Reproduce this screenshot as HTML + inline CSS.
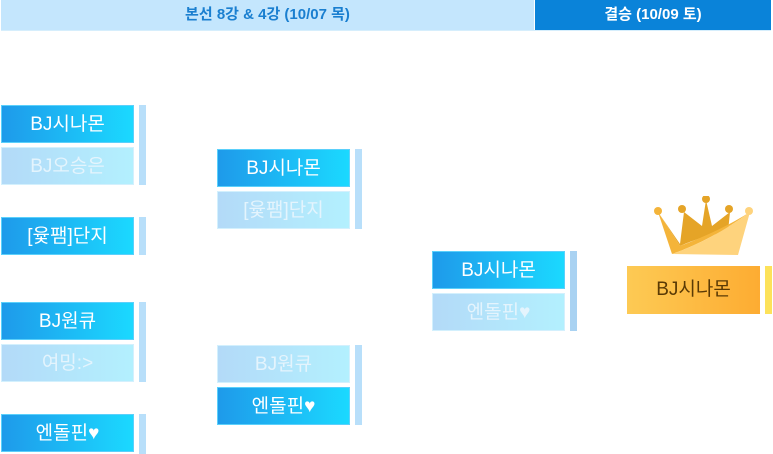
<!DOCTYPE html>
<html><head><meta charset="utf-8"><style>
body{margin:0;width:773px;height:454px;background:#fff;position:relative;overflow:hidden;font-family:"Liberation Sans","Noto Sans CJK KR",sans-serif}
.h{position:absolute;top:0;height:30px;line-height:30px;text-align:center;font-weight:bold;font-size:15px}
.b{position:absolute;width:133px;height:38px;line-height:38px;text-align:center;font-size:19px;color:#fff;box-sizing:border-box}
.a{background:linear-gradient(90deg,#1e9aea,#1bd9ff);border:1px solid #5bd0fb}
.i{background:linear-gradient(90deg,#b3daf8,#b3f0fe);color:#e4f4fd;border:1px solid #d3f0fd}
.r{position:absolute;width:7px;background:#b8dffa}
</style></head><body>
<div class="h" style="left:1px;width:533px;background:#c4e6fd;color:#1a7fd0">본선 8강 &amp; 4강 (10/07 목)</div>
<div class="h" style="left:535px;width:236px;background:#0a83d9;color:#fff">결승 (10/09 토)</div>
<div class="h" style="left:1px;width:770px;top:30px;height:1px;background:#d6eefc"></div>

<div class="b a" style="left:1px;top:105px">BJ시나몬</div>
<div class="b i" style="left:1px;top:147px">BJ오승은</div>
<div class="r" style="left:139px;top:105px;height:80px"></div>
<div class="b a" style="left:1px;top:217px">[윷팸]단지</div>
<div class="r" style="left:139px;top:217px;height:38px"></div>
<div class="b a" style="left:1px;top:302px">BJ원큐</div>
<div class="b i" style="left:1px;top:344px">여밍:&gt;</div>
<div class="r" style="left:139px;top:302px;height:80px"></div>
<div class="b a" style="left:1px;top:414px">엔돌핀♥</div>
<div class="r" style="left:139px;top:414px;height:40px"></div>

<div class="b a" style="left:217px;top:149px">BJ시나몬</div>
<div class="b i" style="left:217px;top:191px">[윷팸]단지</div>
<div class="r" style="left:355px;top:149px;height:80px"></div>
<div class="b i" style="left:217px;top:345px">BJ원큐</div>
<div class="b a" style="left:217px;top:387px">엔돌핀♥</div>
<div class="r" style="left:355px;top:345px;height:80px"></div>

<div class="b a" style="left:432px;top:251px">BJ시나몬</div>
<div class="b i" style="left:432px;top:293px">엔돌핀♥</div>
<div class="r" style="left:570px;top:251px;height:80px;background:#a9d2f2"></div>

<svg style="position:absolute;left:652px;top:196px" width="102" height="64" viewBox="0 0 102 64">
<path d="M6 16 L28 48 L32 16 L50 30 L54 4 L60 30 L78 16 L76 36 Q50 40 28 50 Z" fill="#e5a427"/>
<path d="M6 16 L20 58 Q60 44 98 16 Q70 34 28 50 Z" fill="#f4b43a"/>
<path d="M20 58 Q60 44 98 16 L86 59 Z" fill="#fed37d"/>
<circle cx="6" cy="15" r="4" fill="#f4b43a"/><circle cx="30" cy="13" r="4" fill="#e5a427"/>
<circle cx="54" cy="3" r="4" fill="#e5a427"/><circle cx="77" cy="13" r="4" fill="#e5a427"/><circle cx="97" cy="15" r="4" fill="#fed37d"/>
</svg>
<div class="b" style="left:627px;top:266px;height:48px;line-height:48px;background:linear-gradient(90deg,#fdca54,#fdac32);color:#5a3a05">BJ시나몬</div>
<div class="r" style="left:765px;top:266px;height:48px;background:#fde25a"></div>
</body></html>
